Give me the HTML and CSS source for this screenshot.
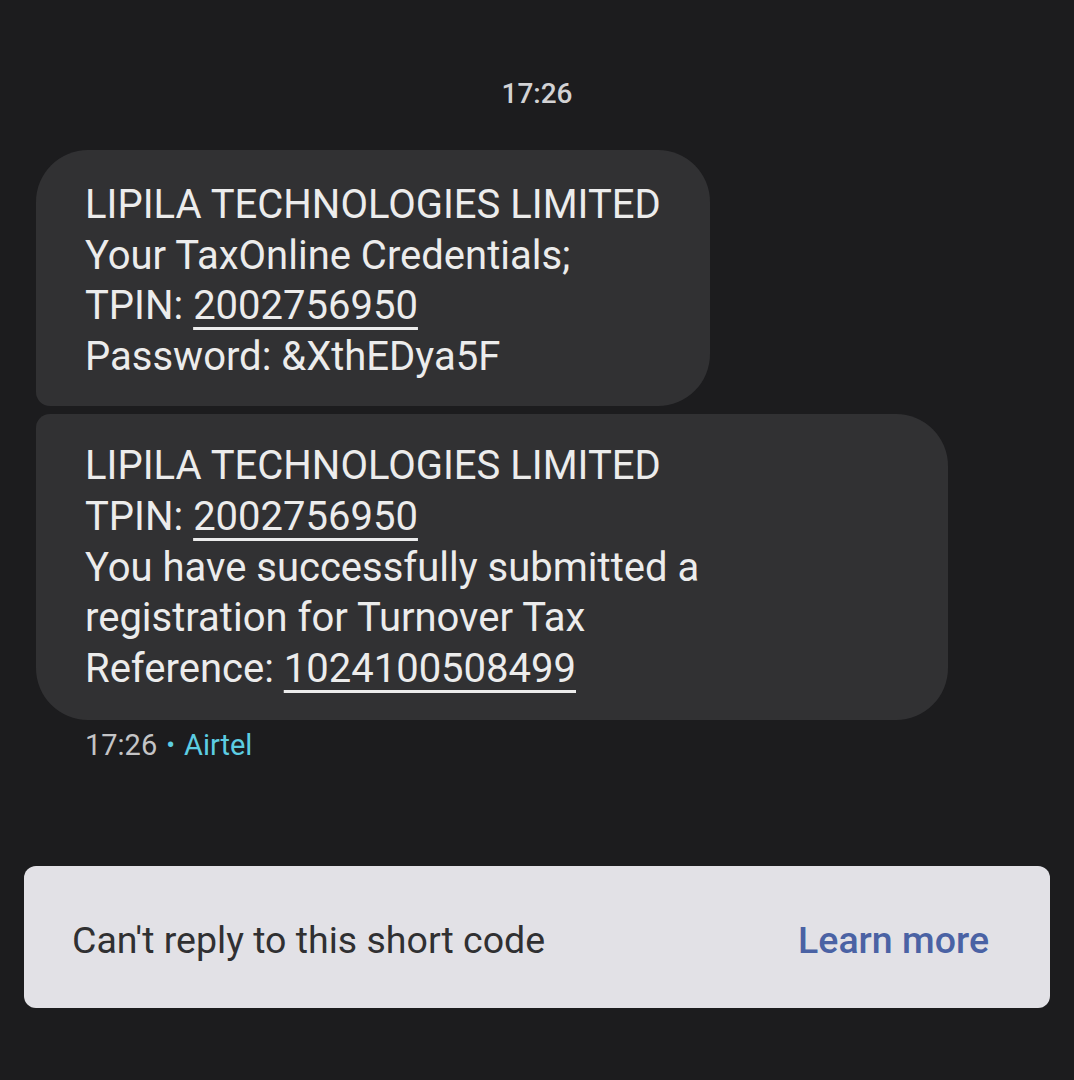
FILE: index.html
```html
<!DOCTYPE html>
<html>
<head>
<meta charset="utf-8">
<link rel="stylesheet" href="styles.css">
</head>
<body>
<div class="screen">
  <div class="stamp">17:26</div>
  <div class="thread">
    <div class="bubble first">
      <div>LIPILA TECHNOLOGIES LIMITED</div>
      <div>Your TaxOnline Credentials;</div>
      <div>TPIN: <span class="link">2002756950</span></div>
      <div>Password: &amp;XthEDya5F</div>
    </div>
    <div class="bubble last">
      <div>LIPILA TECHNOLOGIES LIMITED</div>
      <div>TPIN: <span class="link">2002756950</span></div>
      <div>You have successfully submitted a</div>
      <div>registration for Turnover Tax</div>
      <div>Reference: <span class="link">1024100508499</span></div>
    </div>
    <div class="meta"><span class="time">17:26</span><span class="dot">•</span><span class="carrier">Airtel</span></div>
  </div>
  <div class="notice">
    <span class="notice-text">Can't reply to this short code</span>
    <span class="notice-link">Learn more</span>
  </div>
</div>
</body>
</html>
```

FILE: styles.css
```css
html, body {
  margin: 0;
  padding: 0;
  background: #1c1c1e;
}
body {
  font-family: Roboto, "Noto Sans", sans-serif;
  width: 1074px;
  height: 1080px;
  overflow: hidden;
}
.screen {
  display: flex;
  flex-direction: column;
  padding-top: 74px;
}
.stamp {
  text-align: center;
  color: #d2d2d4;
  font-size: 28px;
  font-weight: 500;
  line-height: 40px;
  margin-bottom: 36px;
}
.thread {
  display: flex;
  flex-direction: column;
  align-items: flex-start;
  padding-left: 36px;
  gap: 8px;
}
.bubble {
  background: #313133;
  color: #ececec;
  font-size: 40px;
  line-height: 50.6px;
  padding: 30px 48px 24px 49px;
}
.bubble.first {
  border-radius: 52px 52px 52px 14px;
  width: 577px;
}
.bubble.last {
  border-radius: 14px 52px 52px 52px;
  width: 815px;
  padding-top: 27px;
  padding-bottom: 26px;
}
.link {
  text-decoration: underline;
  text-decoration-thickness: 2.5px;
  text-underline-offset: 8px;
}
.meta {
  padding-left: 49px;
  margin-top: 0;
  font-size: 29px;
  line-height: 34px;
  display: flex;
  align-items: center;
  gap: 9px;
}
.time { color: #c4c4c6; }
.dot { color: #5ccde2; font-size: 26px; }
.carrier { color: #5ccde2; }
.notice {
  margin: 104px 24px 0 24px;
  height: 142px;
  box-sizing: border-box;
  background: #e2e1e6;
  border-radius: 12px;
  display: flex;
  align-items: center;
  justify-content: space-between;
  padding: 6px 61px 0 48px;
}
.notice-text {
  color: #303032;
  font-size: 37.5px;
}
.notice-link {
  color: #4a62a4;
  font-size: 37.5px;
  font-weight: 500;
}
```
